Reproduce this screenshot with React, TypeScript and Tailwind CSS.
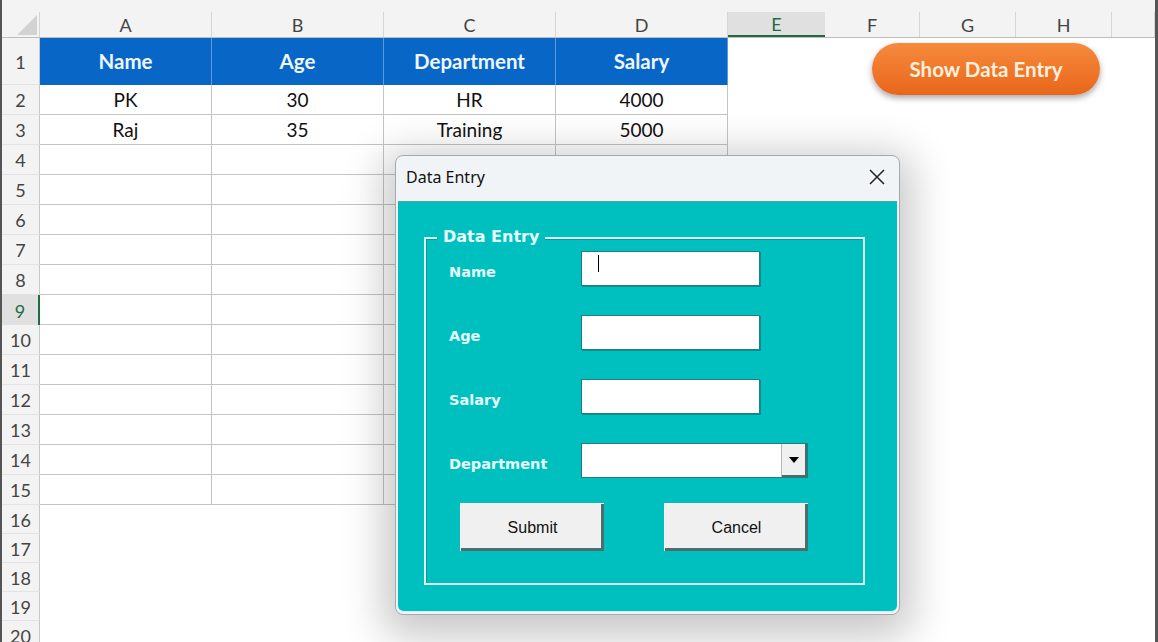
import React from 'react'

const cols = [
  { l: 'A', w: 'w-[172px]' },
  { l: 'B', w: 'w-[172px]' },
  { l: 'C', w: 'w-[172px]' },
  { l: 'D', w: 'w-[172px]' },
  { l: 'E', w: 'w-[97px]' },
  { l: 'F', w: 'w-[95px]' },
  { l: 'G', w: 'w-[96px]' },
  { l: 'H', w: 'w-[96px]' },
  { l: '', w: 'flex-1' },
]

const data = [
  ['PK', '30', 'HR', '4000'],
  ['Raj', '35', 'Training', '5000'],
]

const font = { fontFamily: 'Lato, "Open Sans", sans-serif' }

function ColumnHeader() {
  return (
    <div className="flex shrink-0 h-[26px] bg-[#f3f3f3] border-b border-[#bdbdbd]">
      <div className="w-[38px] flex items-end justify-end pr-[2px] pb-[2px] border-r border-[#d6d6d6]">
        <svg width="20" height="20" viewBox="0 0 20 20">
          <polygon points="20,0 20,20 0,20" fill="#d2d2d2" />
        </svg>
      </div>
      {cols.map((c, i) =>
        c.l === 'E' ? (
          <div
            key={i}
            className={`${c.w} flex items-center justify-center pt-[2px] bg-[#e0e0e0] border-b-2 border-[#1f6b43] text-[#1f6b43] text-[18px]`}
          >
            {c.l}
          </div>
        ) : (
          <div
            key={i}
            className={`${c.w} flex items-center justify-center pt-[2px] border-r border-[#d6d6d6] text-[#444] text-[18px]`}
          >
            {c.l}
          </div>
        )
      )}
    </div>
  )
}

function RowHeader({ n, h }: { n: number; h: string }) {
  if (n === 9) {
    return (
      <div
        className={`w-[38px] ${h} flex items-center justify-center pt-[2px] bg-[#e0e0e0] border-r-2 border-[#1f6b43] text-[#1f6b43] text-[18px]`}
      >
        {n}
      </div>
    )
  }
  return (
    <div
      className={`w-[38px] ${h} flex items-center justify-center pt-[2px] bg-[#f3f3f3] border-r border-b border-r-[#c8c8c8] border-b-[#e2e2e2] text-[#444] text-[18px]`}
    >
      {n}
    </div>
  )
}

function Sheet() {
  const rows = Array.from({ length: 20 }, (_, i) => i + 1)
  return (
    <div className="flex flex-col w-[1158px] h-[642px] overflow-hidden bg-white border-l-2 border-r-[3px] border-[#555]" style={font}>
      <div className="h-[12px] shrink-0 bg-[#f3f3f3]" />
      <ColumnHeader />
      {rows.map((n) => {
        const h = n === 1 ? 'h-[47px]' : n <= 15 ? 'h-[30px]' : 'h-[29px]'
        return (
          <div key={n} className={`flex shrink-0 ${h}`}>
            <RowHeader n={n} h={h} />
            {cols.map((c, ci) => {
              if (ci < 4 && n === 1) {
                return (
                  <div
                    key={ci}
                    className={`${c.w} flex items-center justify-center bg-[#0866c6] border-r border-[#5d9ad8] text-[#eef6ff] font-bold text-[20.5px]`}
                  >
                    {['Name', 'Age', 'Department', 'Salary'][ci]}
                  </div>
                )
              }
              if (ci < 4 && n <= 15) {
                const v = n <= 3 ? data[n - 2][ci] : ''
                return (
                  <div
                    key={ci}
                    className={`${c.w} flex items-center justify-center pt-[2px] border-r border-b border-[#c4c4c4] text-[#111] text-[19px]`}
                  >
                    {v}
                  </div>
                )
              }
              return <div key={ci} className={c.w} />
            })}
          </div>
        )
      })}
    </div>
  )
}

function TextBox({ cursor }: { cursor?: boolean }) {
  return (
    <div className="w-[179px] h-[35px] bg-white border border-[#1f7f7f] shadow-[1px_1px_0_#0a9090] flex items-center pl-[16px]">
      {cursor && <div className="w-[1px] h-[17px] bg-black -mt-[10px]" />}
    </div>
  )
}

function ComboBox() {
  return (
    <div className="w-[227px] h-[35px] bg-white border border-[#1f7f7f] flex">
      <div className="flex-1" />
      <div className="w-[26px] h-full bg-[#f0f0f0] border-l border-[#b8b8b8] shadow-[inset_-2px_-2px_0_#4d6b6b] flex items-center justify-center">
        <svg width="10" height="6" viewBox="0 0 10 6" className="-mt-[2px] -ml-[2px]">
          <polygon points="0,0 10,0 5,6" fill="#000" />
        </svg>
      </div>
    </div>
  )
}

function FormButton({ label }: { label: string }) {
  return (
    <button
      type="button"
      className="w-[144px] h-[48px] bg-[#f0f0f0] border-t border-l border-[#ffffff] shadow-[inset_-3px_-3px_0_#4d6e6e] text-[16px] text-[#111]"
      style={{ fontFamily: '"Liberation Sans", Arial, sans-serif' }}
    >
      {label}
    </button>
  )
}

function DataEntryDialog() {
  const labelCls = 'w-[132px] mt-[9px] text-[#e6ffff] font-bold text-[14.5px]'
  const fields = ['Name', 'Age', 'Salary']
  return (
    <div className="absolute left-[395px] top-[155px] w-[505px] h-[460px] rounded-[8px] bg-[#f1f4f7] border border-[#a8a8a8] shadow-[0_10px_40px_12px_rgba(0,0,0,0.22)] flex flex-col overflow-hidden">
      <div className="h-[45px] shrink-0 flex items-center justify-between pl-[10px] pr-[14px] pb-[3px]" style={{ fontFamily: '"Noto Sans", sans-serif' }}>
        <span className="text-[16px] text-[#111]">Data Entry</span>
        <svg width="16" height="16" viewBox="0 0 16 16">
          <path d="M1 1L15 15M15 1L1 15" stroke="#222" strokeWidth="1.5" />
        </svg>
      </div>
      <div className="flex-1 mx-[2px] mb-[2px] bg-[#00bfbf] border-t border-[#5f9f9f] border-b border-b-[#c8f4f4] rounded-b-[6px] pt-[35px] pl-[26px] pr-[32px]" style={{ fontFamily: '"DejaVu Sans", sans-serif' }}>
        <div className="relative h-[348px] border-2 border-[#d9ffff] shadow-[inset_1px_1px_0_#0a9a9a] pt-[12px] pl-[23px]">
          <span className="absolute -top-[12px] left-[11px] bg-[#00bfbf] px-[6px] text-[16px] font-bold text-[#e6ffff] leading-[20px]">
            Data Entry
          </span>
          <div className="flex flex-col gap-[29px]">
            {fields.map((f, i) => (
              <div key={f} className="flex items-center">
                <span className={labelCls}>{f}</span>
                <TextBox cursor={i === 0} />
              </div>
            ))}
            <div className="flex items-center">
              <span className={labelCls}>Department</span>
              <ComboBox />
            </div>
          </div>
          <div className="flex gap-[60px] mt-[25px] pl-[11px]">
            <FormButton label="Submit" />
            <FormButton label="Cancel" />
          </div>
        </div>
      </div>
    </div>
  )
}

export default function App() {
  return (
    <div className="relative w-[1158px] h-[642px] overflow-hidden">
      <Sheet />
      <button
        type="button"
        className="absolute left-[872px] top-[43px] w-[228px] h-[52px] rounded-full bg-gradient-to-b from-[#f68a3c] to-[#e8661a] shadow-[0_3px_6px_rgba(0,0,0,0.35)] text-[#fff1dc] font-bold text-[20.5px]"
        style={font}
      >
        Show Data Entry
      </button>
      <DataEntryDialog />
    </div>
  )
}
